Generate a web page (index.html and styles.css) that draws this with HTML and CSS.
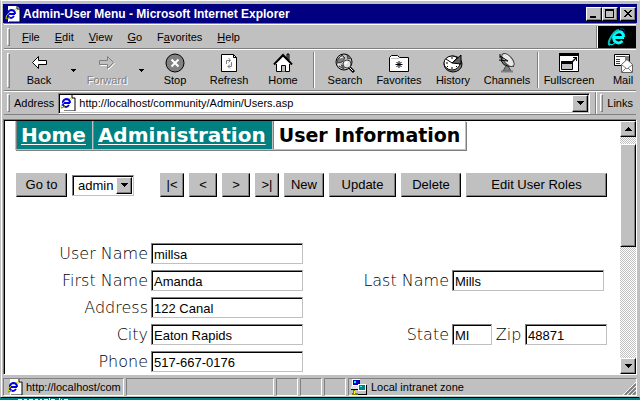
FILE: index.html
```html
<!DOCTYPE html>
<html lang="en">
<head>
    <meta charset="UTF-8">
    <meta name="viewport" content="width=device-width, initial-scale=1.0">
    <title>Admin-User Menu</title>
    <link rel="stylesheet" href="styles.css">
</head>
<body>
    <!-- shared icons -->
    <svg class="defs" width="0" height="0">
        <symbol id="page-icon" viewBox="0 0 16 16">
            <path d="M3 0h9l3 3v13H3z" fill="#fff"/>
            <path d="M12 0v3h3v13H4" fill="none" stroke="#000"/>
            <path d="M10 8H4M9 10q-3 4-6 0q-1-5 3-6q4 0 4 4" fill="none" stroke="#0000e0" stroke-width="2"/>
            <path d="M1 13Q0 10 5 6M9 4q3-2 2 1" fill="none" stroke="#d0d000" stroke-width="1"/>
            <path d="M1 13q2 0 4-2" fill="none" stroke="#808000"/>
        </symbol>
        <symbol id="down" viewBox="0 0 7 4">
            <path d="M0 0h7v1H6v1H5v1H4v1H3V3H2V2H1V1H0z"/>
        </symbol>
        <symbol id="up" viewBox="0 0 7 4">
            <path d="M3 0h1v1h1v1h1v1h1v1H0V3h1V2h1V1h1z"/>
        </symbol>
    </svg>

    <div class="window">
        <div class="titlebar">
            <svg width="16" height="16"><use href="#page-icon"/></svg>
            <h1>Admin-User Menu - Microsoft Internet Explorer</h1>
            <button class="win-btn" aria-label="Minimize"><svg width="12" height="10"><path d="M2 7h6v2H2z"/></svg></button>
            <button class="win-btn" aria-label="Maximize"><svg width="12" height="10"><path d="M1 0h9v9H1zM2 2v6h7V2z" fill-rule="evenodd"/></svg></button>
            <button class="win-btn close" aria-label="Close"><svg width="12" height="10"><path d="M2 1h2v1h1v1h2V2h1V1h2v1H9v1H8v1H7v1h1v1h1v1h1v1H8V7H7V6H5v1H4v1H2V7h1V6h1V5h1V4H4V3H3V2H2z"/></svg></button>
        </div>

        <div class="band menubar">
            <span class="grip"></span>
            <nav>
                <button><u>F</u>ile</button>
                <button><u>E</u>dit</button>
                <button><u>V</u>iew</button>
                <button><u>G</u>o</button>
                <button>F<u>a</u>vorites</button>
                <button><u>H</u>elp</button>
            </nav>
            <div class="logo">
                <svg width="20" height="20" viewBox="0 0 20 20">
                    <path d="M17 10.500H7M15.500 14q-4 4-8 0q-3-7 3-9q6-1 6 5" fill="none" stroke="#00ffff" stroke-width="3"/>
                    <path d="M3 18Q0 17 4 10T12 3" fill="none" stroke="#00c0c0" stroke-width="2"/>
                    <path d="M2 17q3 2 6-1" fill="none" stroke="#00ffff" stroke-width="1"/>
                    <path d="M13 2q5-2 4 4" fill="none" stroke="#004080" stroke-width="1"/>
                </svg>
            </div>
        </div>

        <div class="band toolbar">
            <span class="grip"></span>
            <button class="tool">
                <svg width="20" height="20"><path d="M3.500 9.500L9.500 3.500V7.500H17.500V11.500H9.500V15.500Z" fill="#fff" stroke="#000"/></svg>
                Back
            </button>
            <button class="drop" aria-label="Back history"><svg width="5" height="3"><path d="M0 0h5v1H4v1H3v1H2V2H1V1H0z"/></svg></button>
            <button class="tool off">
                <svg width="20" height="20"><path d="M17.500 10.500L11.500 4.500V8.500H3.500V12.500H11.500V16.500Z" fill="none" stroke="#fff"/><path d="M16.500 9.500L10.500 3.500V7.500H2.500V11.500H10.500V15.500Z" fill="#c0c0c0" stroke="#808080"/></svg>
                Forward
            </button>
            <button class="drop" aria-label="Forward history"><svg width="5" height="3"><path d="M0 0h5v1H4v1H3v1H2V2H1V1H0z"/></svg></button>
            <button class="tool">
                <svg width="20" height="20"><circle cx="10" cy="10" r="9" fill="#808080" stroke="#000"/><path d="M6.500 6.500l7 7M13.500 6.500l-7 7" stroke="#fff" stroke-width="2"/></svg>
                Stop
            </button>
            <button class="tool">
                <svg width="20" height="20"><path d="M2.500 1.500H14.500L17.500 4.500V18.500H2.500Z" fill="#fff" stroke="#000"/><path d="M14.500 1.500v3h3" fill="none" stroke="#000"/><path d="M7.500 11V7.500h4M9.500 5l2 2.500-2 2M12.500 9v4.500H9M11 11.500l-2 2 2 2" fill="none" stroke="#808080"/></svg>
                Refresh
            </button>
            <button class="tool">
                <svg width="20" height="20"><path d="M14 1h2v6h-2z" fill="#808080" stroke="#000"/><path d="M3.500 9.500V18.500H16.500V9.500L10 3Z" fill="#fff" stroke="#000"/><path d="M1 11.500L10 2l9 9.500" fill="none" stroke="#000" stroke-width="2"/><path d="M3 11L10 4l7 7" fill="none" stroke="#c0c0c0"/><path d="M8.500 18.500v-6h4v6" fill="#c0c0c0" stroke="#000"/></svg>
                Home
            </button>
            <span class="divider"></span>
            <button class="tool">
                <svg width="20" height="20"><circle cx="9" cy="9" r="8" fill="#c0c0c0" stroke="#000"/><path d="M3 6l4-4 3 3-3 4-5 1zM12 2l4 3-3 1zM4 13l3-1 2 4z" fill="#808080" stroke="#404040"/><path d="M3 11l3 2M5 5l3-1" stroke="#fff"/><path d="M14 14l5 5" stroke="#000" stroke-width="3"/><path d="M14 14l4 4" stroke="#fff"/><circle cx="12" cy="11" r="4" fill="#e0e0e0" stroke="#404040"/><path d="M10 11l2-2" stroke="#fff" stroke-width="2"/></svg>
                Search
            </button>
            <button class="tool">
                <svg width="20" height="20"><path d="M.5 18.500V4.500L2.500 2.500H8.500L10.500 4.500H19.500V18.500Z" fill="#fff" stroke="#000"/><path d="M2 5.500h8" stroke="#c0c0c0"/><path d="M10 8v7M6.500 11.500h7M7.500 9l5 5M12.500 9l-5 5" stroke="#000"/></svg>
                Favorites
            </button>
            <button class="tool">
                <svg width="20" height="20"><ellipse cx="10" cy="11" rx="9" ry="8" fill="#808080" stroke="#000"/><ellipse cx="9" cy="10" rx="8" ry="7" fill="#fff" stroke="#000"/><path d="M9 10l9-8v9z" fill="#606060" stroke="#000"/><path d="M9 10L3 6M9 10l5-5" stroke="#000"/><path d="M9 4v2M3 10h2M9 14v2M13 13l1 1M5 13l-1 1" stroke="#000"/></svg>
                History
            </button>
            <button class="tool">
                <svg width="20" height="20"><path d="M9 13l-3 5h8l-3-5" fill="#808080" stroke="#404040"/><path d="M4 3q-1 12 13 10" fill="#808080" stroke="#000"/><ellipse cx="11" cy="7" rx="4" ry="8" transform="rotate(-42 11 7)" fill="#e8e8e8" stroke="#404040"/><path d="M3 3l8 5M2 7l9 1M3 1v4" stroke="#000"/><path d="M4 18.500h12" stroke="#808080" stroke-width="2"/></svg>
                Channels
            </button>
            <span class="divider"></span>
            <button class="tool">
                <svg width="20" height="20"><path d="M.5 .5h19v18H.5z" fill="#fff" stroke="#000"/><path d="M0 0h20v3H0z"/><path d="M2.500 8.500h11v8h-11z" fill="#c0c0c0" stroke="#000"/><path d="M2 8h12v3H2zM14 4h4v4h-1V6l-3 3-1-1 3-3h-2z"/></svg>
                Fullscreen
            </button>
            <button class="tool">
                <svg width="20" height="20"><path d="M1.500 1.500h15v11h-15z" fill="#fff" stroke="#000"/><path d="M3 3.500h9M3 6.500h4M3 8.500h4M3 10.500h4" stroke="#404040"/><path d="M12 3h4v5h-4z" fill="#808080"/><path d="M8.500 19.500V11.500L14 6.500L19.500 11.500V19.500Z" fill="#fff" stroke="#606060"/><path d="M9 12l5 4 5-4M9 19l4-4M19 19l-4-4" fill="none" stroke="#808080"/></svg>
                Mail
            </button>
        </div>

        <div class="band addressbar">
            <span class="grip"></span>
            <label for="url">Address</label>
            <div class="url-box">
                <svg width="16" height="16"><use href="#page-icon"/></svg>
                <input id="url" type="text" value="http://localhost/community/Admin/Users.asp">
                <button class="bevel" aria-label="Show addresses"><svg width="7" height="4"><use href="#down"/></svg></button>
            </div>
            <div class="links">
                <span class="grip"></span>
                <button>Links</button>
            </div>
        </div>

        <div class="view">
            <main>
                <div class="crumbs">
                    <a href="#">Home</a>
                    <a href="#">Administration</a>
                    <strong>User Information</strong>
                </div>

                <form>
                    <div class="actions">
                        <button type="button" class="w-goto">Go to</button>
                        <div class="user-select">
                            <select aria-label="User">
                                <option>admin</option>
                            </select>
                            <span class="bevel"><svg width="7" height="4"><use href="#down"/></svg></span>
                        </div>
                        <button type="button" class="w-end">|&lt;</button>
                        <button type="button" class="w-step">&lt;</button>
                        <button type="button" class="w-step">&gt;</button>
                        <button type="button" class="w-end">&gt;|</button>
                        <button type="button" class="w-new">New</button>
                        <button type="button" class="w-update">Update</button>
                        <button type="button" class="w-delete">Delete</button>
                        <button type="button" class="w-roles">Edit User Roles</button>
                    </div>

                    <div class="fields">
                        <label for="user">User Name</label>
                        <input id="user" type="text" value="millsa">

                        <label for="first" class="first-col">First Name</label>
                        <input id="first" type="text" value="Amanda">
                        <label for="last">Last Name</label>
                        <input id="last" type="text" value="Mills">

                        <label for="address" class="first-col">Address</label>
                        <input id="address" type="text" value="122 Canal">

                        <label for="city" class="first-col">City</label>
                        <input id="city" type="text" value="Eaton Rapids">
                        <label for="state">State</label>
                        <div class="state-zip">
                            <input id="state" type="text" value="MI">
                            <label for="zip">Zip</label>
                            <input id="zip" type="text" value="48871">
                        </div>

                        <label for="phone" class="first-col">Phone</label>
                        <input id="phone" type="text" value="517-667-0176">
                    </div>
                </form>
            </main>
            <div class="scrollbar">
                <button class="bevel" aria-label="Scroll up"><svg width="7" height="4"><use href="#up"/></svg></button>
                <div class="track">
                    <div class="thumb bevel"></div>
                </div>
                <button class="bevel" aria-label="Scroll down"><svg width="7" height="4"><use href="#down"/></svg></button>
            </div>
        </div>

        <footer class="status">
            <div class="panel address">
                <svg width="16" height="16"><use href="#page-icon"/></svg>
                <span>http://localhost/com</span>
            </div>
            <div class="panel progress"></div>
            <div class="panel small"></div>
            <div class="panel small"></div>
            <div class="panel small"></div>
            <div class="panel zone">
                <svg width="16" height="16" shape-rendering="crispEdges">
                    <path d="M1 0h8v7H1z" fill="#fff"/><path d="M2 1h6v5H2z" fill="#0000c0"/><path d="M3 2h2v2H3z" fill="#00ffff"/>
                    <path d="M0 7h9v3H0z" fill="#e0e0e0"/><path d="M8 1h1v6H8zM0 10h7v1H0z"/>
                    <path d="M7 5h8v7H7z" fill="#fff"/><path d="M8 6h6v5H8z" fill="#008080"/><path d="M9 7h2v1H9z" fill="#00ffff"/>
                    <path d="M6 12h10v3H6z" fill="#c0c0c0"/><path d="M15 6h1v10H6v-1h9z"/>
                    <path d="M2 11h2v3h3v2H1v-2h1z" fill="#808000"/><path d="M3 12h1v3H3z" fill="#ffff00"/>
                </svg>
                <span>Local intranet zone</span>
                <svg class="sizer" width="13" height="13"><path d="M0 13L13 0M4 13l9-9M8 13l5-5" stroke="#fff"/><path d="M2 13L13 2M6 13l7-7M10 13l3-3" stroke="#808080" stroke-width="2"/></svg>
            </div>
        </footer>
    </div>
    <!-- top edge of a desktop caption below the window -->
    <svg class="caption" width="50" height="2" shape-rendering="crispEdges"><path d="M0 1h4M6 1h3M11 1h4M17 1h3M22 1h2M26 1h4M31 0v2M33 1h4M41 0v2M43 1h1M46 1h4" stroke="#fff"/></svg>
</body>
</html>
```
FILE: styles.css
```css
* {
    box-sizing: border-box;
}
body {
    margin: 0;
    height: 100vh;
    display: flex;
    flex-direction: column;
    overflow: hidden;
    background: #008080;
    color: #000;
    font-family: "Liberation Sans", Arial, sans-serif;
    font-size: 11px;
}
button, input, select {
    font: inherit;
    color: inherit;
    margin: 0;
    padding: 0;
    border: 0;
    border-radius: 0;
    background: none;
    min-width: 0;
}
svg {
    display: block;
    flex: none;
}
.defs {
    position: absolute;
}
.window {
    flex: 1;
    min-height: 0;
    display: flex;
    flex-direction: column;
    padding: 2px 2px 1px;
    background: #c0c0c0;
    border: 1px solid #c0c0c0;
    border-top-color: #fff;
    border-bottom: 1px solid #000;
    box-shadow: inset 1px 0 #fff;
}
.caption {
    margin-left: 18px;
}

/* raised 3d edge */
.bevel, .win-btn {
    display: flex;
    align-items: center;
    justify-content: center;
    background: #c0c0c0;
    border: 1px solid;
    border-color: #fff #000 #000 #fff;
    box-shadow: inset -1px -1px #808080;
}

.titlebar {
    display: flex;
    align-items: center;
    height: 19px;
    margin-top: 1px;
    padding: 0 1px 0 2px;
    background: #000080;
    color: #fff;
}
.titlebar h1 {
    flex: 1;
    margin: 0 0 0 2px;
    font-size: 12px;
    line-height: 18px;
    white-space: nowrap;
}
.win-btn {
    width: 16px;
    height: 14px;
}
.close {
    margin-left: 2px;
}

.band {
    display: flex;
    align-items: center;
    margin: 0 1px;
    border-top: 1px solid #fff;
    border-bottom: 1px solid #808080;
    padding-left: 3px;
}
.grip {
    width: 3px;
    height: 18px;
    border: 1px solid;
    border-color: #fff #808080 #808080 #fff;
}
.menubar {
    height: 25px;
    margin-top: 1px;
    box-shadow: 0 -1px #808080;
}
.menubar nav {
    flex: 1;
    display: flex;
    gap: 15px;
    padding-left: 12px;
}
.logo {
    display: flex;
    justify-content: center;
    align-items: center;
    width: 38px;
    height: 22px;
    background: #000;
    box-shadow: -1px 0 #fff, -2px 0 #808080;
}

.toolbar {
    height: 42px;
    overflow: hidden;
}
.toolbar .grip {
    height: 35px;
    flex: none;
    margin-right: 2px;
}
.tool {
    flex: none;
    width: 54px;
    display: flex;
    flex-direction: column;
    align-items: center;
    line-height: 14px;
}
.off {
    color: #808080;
    text-shadow: 1px 1px #fff;
}
.drop {
    flex: none;
    width: 14px;
    display: flex;
    justify-content: center;
}
.divider {
    flex: none;
    width: 2px;
    height: 36px;
    margin: 0 3px;
    border-left: 1px solid #808080;
    border-right: 1px solid #fff;
}

.addressbar {
    height: 24px;
}
.addressbar label {
    margin: 0 4px;
}
.url-box {
    flex: 1;
    display: flex;
    align-items: center;
    height: 21px;
    padding: 0 1px;
    background: #fff;
    border: 1px solid;
    border-color: #808080 #fff #fff #808080;
    box-shadow: inset 1px 1px #000, inset -1px -1px #c0c0c0;
}
.url-box input {
    flex: 1;
    margin-left: 3px;
}
.url-box .bevel {
    width: 16px;
    height: 17px;
}
.links {
    display: flex;
    align-items: center;
    gap: 4px;
    margin-left: 5px;
    padding: 2px 3px 2px 4px;
    border-left: 1px solid #808080;
    box-shadow: inset 1px 0 #fff;
}

/* page area */
.view {
    flex: 1;
    min-height: 0;
    display: flex;
    margin-top: 4px;
    background: #fff;
    border: 1px solid;
    border-color: #808080 #fff #fff #808080;
    box-shadow: inset 1px 1px #000;
    padding: 1px 0 0 1px;
}
main {
    flex: 1;
    min-width: 0;
    overflow: hidden;
    padding-left: 10px;
}
.crumbs {
    display: flex;
    width: max-content;
    border: solid #c0c0c0;
    border-width: 0 1px 1px;
    box-shadow: 1px 1px #808080;
    font-family: "DejaVu Sans", Verdana, sans-serif;
    font-size: 20px;
    font-weight: bold;
    line-height: 28px;
}
.crumbs a {
    padding: 0 6px 0 4px;
    background: #008080;
    color: #fff;
    border-left: 1px solid #808080;
    border-right: 1px solid #c0c0c0;
    text-underline-offset: 2px;
    text-decoration-thickness: 1px;
}
.crumbs strong {
    padding: 0 5px;
    border-left: 1px solid #808080;
    font-size: 19px;
}
.actions {
    display: flex;
    gap: 5px;
    margin: 23px 0 46px 1px;
    font-size: 13px;
}
.actions button {
    flex: none;
    height: 24px;
    padding-bottom: 1px;
    background: #c0c0c0;
    border: 1px solid;
    border-color: #c0c0c0 #000 #000 #c0c0c0;
    box-shadow: inset -1px -1px #808080;
}
.actions .w-goto { width: 51px; }
.actions .w-end { width: 24px; }
.actions .w-step { width: 28px; }
.actions .w-new { width: 40px; }
.actions .w-update { width: 67px; }
.actions .w-delete { width: 60px; }
.actions .w-roles { width: 141px; }

.user-select, .fields input {
    background: #fff;
    border: 1px solid;
    border-color: #808080 #c0c0c0 #c0c0c0 #808080;
    box-shadow: inset 1px 1px #000;
    height: 21px;
    font-size: 13px;
}
.user-select {
    flex: none;
    display: grid;
    align-self: center;
    width: 62px;
    margin-right: 21px;
    padding: 1px;
}
.user-select select {
    grid-area: 1 / 1;
    appearance: none;
    padding-left: 4px;
}
.user-select .bevel {
    grid-area: 1 / 1;
    justify-self: end;
    width: 16px;
    pointer-events: none;
}

.fields {
    display: grid;
    grid-template-columns: 133px 152px 143px 155px;
    column-gap: 3px;
    row-gap: 6px;
    align-items: center;
}
.fields label {
    font-family: "DejaVu Sans", Verdana, sans-serif;
    font-size: 16px;
    font-weight: 200;
    line-height: 20px;
    text-align: right;
}
.fields .first-col {
    grid-column: 1;
}
.fields input {
    width: 152px;
    padding: 1px 2px 0;
}
.state-zip {
    display: flex;
    justify-content: space-between;
    align-items: center;
}
.fields #state {
    width: 40px;
}
.fields #zip {
    width: 82px;
}

.scrollbar {
    width: 16px;
    display: flex;
    flex-direction: column;
}
.scrollbar button {
    height: 16px;
}
.track {
    flex: 1;
    padding-top: 7px;
    background: repeating-conic-gradient(#c0c0c0 0 25%, #fff 0 50%) 0 0 / 2px 2px;
}
.thumb {
    height: 48%;
    box-shadow: inset 1px 1px #c0c0c0, inset -1px -1px #808080;
}

/* status bar */
.status {
    display: flex;
    gap: 2px;
    margin-top: 3px;
    height: 18px;
}
.panel {
    flex: none;
    display: flex;
    align-items: center;
    overflow: hidden;
    border: 1px solid;
    border-color: #808080 #fff #fff #808080;
    white-space: nowrap;
}
.panel.address {
    width: 121px;
    gap: 3px;
    padding-left: 3px;
}
.progress {
    width: 148px;
}
.small {
    width: 22px;
}
.zone {
    flex: 1;
    gap: 4px;
    padding-left: 2px;
}
.sizer {
    margin-left: auto;
    align-self: flex-end;
}
```
